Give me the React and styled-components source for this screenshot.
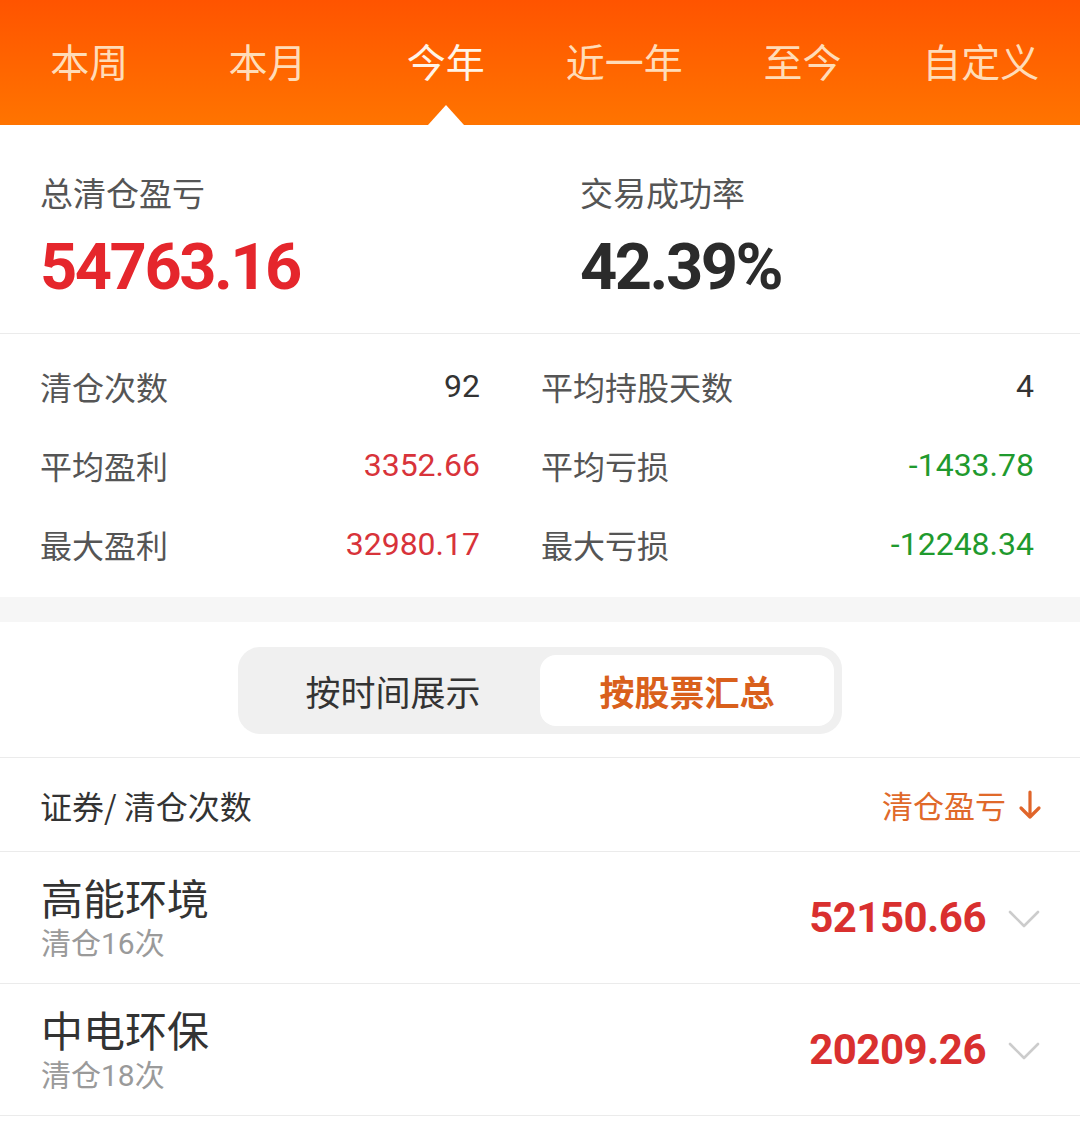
import React, { useState } from "react";
import styled, { createGlobalStyle } from "styled-components";

const GlobalStyle = createGlobalStyle`
  body {
    margin: 0;
    background: #ffffff;
    font-family: "Noto Sans CJK SC", "Noto Sans", sans-serif;
    color: #333333;
  }
`;

const NUM = `Roboto, "Noto Sans CJK SC", sans-serif`;

const tabs = ["本周", "本月", "今年", "近一年", "至今", "自定义"];

const stats = [
  [
    { label: "清仓次数", value: "92", tone: "plain" },
    { label: "平均持股天数", value: "4", tone: "plain" },
  ],
  [
    { label: "平均盈利", value: "3352.66", tone: "up" },
    { label: "平均亏损", value: "-1433.78", tone: "down" },
  ],
  [
    { label: "最大盈利", value: "32980.17", tone: "up" },
    { label: "最大亏损", value: "-12248.34", tone: "down" },
  ],
];

const stocks = [
  { name: "高能环境", count: 16, profit: "52150.66" },
  { name: "中电环保", count: 18, profit: "20209.26" },
];

const toneColor = {
  plain: "#333333",
  up: "#d8333a",
  down: "#1f9a2e",
};

export default function App() {
  const [activeTab, setActiveTab] = useState(2);
  const [mode, setMode] = useState(1);

  return (
    <>
      <GlobalStyle />
      <Header>
        {tabs.map((t, i) => (
          <Tab key={t} $active={i === activeTab} onClick={() => setActiveTab(i)}>
            {t}
          </Tab>
        ))}
      </Header>

      <Summary>
        <SummaryItem>
          <SummaryLabel>总清仓盈亏</SummaryLabel>
          <BigNumber $color="#e5262c">54763.16</BigNumber>
        </SummaryItem>
        <SummaryItem>
          <SummaryLabel>交易成功率</SummaryLabel>
          <BigNumber $color="#2b2b2b">42.39%</BigNumber>
        </SummaryItem>
      </Summary>

      <StatsGrid>
        {stats.map((row) =>
          row.map((s) => (
            <StatCell key={s.label}>
              <StatLabel>{s.label}</StatLabel>
              <StatValue $tone={s.tone}>{s.value}</StatValue>
            </StatCell>
          ))
        )}
      </StatsGrid>

      <Band />

      <SegmentArea>
        <Segmented>
          <Segment $active={mode === 0} onClick={() => setMode(0)}>
            按时间展示
          </Segment>
          <Segment $active={mode === 1} onClick={() => setMode(1)}>
            按股票汇总
          </Segment>
        </Segmented>
      </SegmentArea>

      <ListHeader>
        <HeaderLeft>证券/ 清仓次数</HeaderLeft>
        <SortButton>
          清仓盈亏
          <svg width="24" height="30" viewBox="0 0 24 30" fill="none">
            <path
              d="M12 2 V27 M3 18 L12 27 L21 18"
              stroke="#e0652a"
              strokeWidth="3.2"
              strokeLinecap="round"
              strokeLinejoin="round"
            />
          </svg>
        </SortButton>
      </ListHeader>

      {stocks.map((s) => (
        <StockRow key={s.name}>
          <StockInfo>
            <StockName>{s.name}</StockName>
            <StockSub>清仓{s.count}次</StockSub>
          </StockInfo>
          <StockProfit>{s.profit}</StockProfit>
          <Chevron width="32" height="18" viewBox="0 0 32 18" fill="none">
            <path
              d="M2 2 L16 16 L30 2"
              stroke="#cccccc"
              strokeWidth="2.6"
              strokeLinecap="round"
              strokeLinejoin="round"
            />
          </Chevron>
        </StockRow>
      ))}
    </>
  );
}

const Header = styled.div`
  height: 125px;
  background: linear-gradient(180deg, #ff5400 0%, #ff7400 100%);
  display: grid;
  grid-template-columns: repeat(6, 1fr);
  align-items: center;
  padding: 0 10px 6px 0;
  box-sizing: border-box;
`;

const Tab = styled.div`
  position: relative;
  text-align: center;
  font-size: 39px;
  line-height: 50px;
  color: ${(p) => (p.$active ? "#fff4e8" : "#ffdcb8")};
  cursor: pointer;

  &::after {
    content: "";
    display: ${(p) => (p.$active ? "block" : "none")};
    position: absolute;
    left: 50%;
    bottom: -40px;
    transform: translateX(-50%);
    width: 0;
    height: 0;
    border-left: 18px solid transparent;
    border-right: 18px solid transparent;
    border-bottom: 20px solid #ffffff;
  }
`;

const Summary = styled.div`
  display: grid;
  grid-template-columns: 540px 1fr;
  padding: 45px 0 28px 40px;
  border-bottom: 1px solid #ebebeb;
`;

const SummaryItem = styled.div`
  display: flex;
  flex-direction: column;
`;

const SummaryLabel = styled.div`
  font-size: 33px;
  line-height: 44px;
  color: #555555;
`;

const BigNumber = styled.div`
  margin-top: 15px;
  font-family: ${NUM};
  font-weight: 700;
  font-size: 65px;
  line-height: 76px;
  letter-spacing: -2.5px;
  color: ${(p) => p.$color};
`;

const StatsGrid = styled.div`
  display: grid;
  grid-template-columns: 440px 1fr;
  column-gap: 61px;
  grid-auto-rows: 79px;
  padding: 12px 46px 14px 40px;
`;

const StatCell = styled.div`
  display: flex;
  align-items: center;
  justify-content: space-between;
`;

const StatLabel = styled.span`
  font-size: 32px;
  color: #555555;
`;

const StatValue = styled.span`
  font-family: ${NUM};
  font-size: 32px;
  color: ${(p) => toneColor[p.$tone]};
`;

const Band = styled.div`
  height: 25px;
  background: #f6f6f6;
`;

const SegmentArea = styled.div`
  display: flex;
  justify-content: center;
  padding: 25px 0 23px;
  border-bottom: 1px solid #ebebeb;
`;

const Segmented = styled.div`
  width: 604px;
  height: 87px;
  box-sizing: border-box;
  padding: 8px;
  border-radius: 22px;
  background: #f0f0f0;
  display: grid;
  grid-template-columns: 1fr 1fr;
`;

const Segment = styled.div`
  display: flex;
  align-items: center;
  justify-content: center;
  border-radius: 16px;
  font-size: 35px;
  cursor: pointer;
  background: ${(p) => (p.$active ? "#ffffff" : "transparent")};
  color: ${(p) => (p.$active ? "#d9601c" : "#333333")};
  font-weight: ${(p) => (p.$active ? 700 : 400)};
`;

const ListHeader = styled.div`
  height: 93px;
  display: flex;
  align-items: center;
  justify-content: space-between;
  padding: 0 38px 0 40px;
  border-bottom: 1px solid #ebebeb;
`;

const HeaderLeft = styled.span`
  font-size: 32px;
  color: #333333;
`;

const SortButton = styled.span`
  display: flex;
  align-items: center;
  gap: 12px;
  font-size: 31px;
  color: #e0692a;
`;

const StockRow = styled.div`
  height: 131px;
  display: flex;
  align-items: center;
  padding: 0 40px 0 41px;
  border-bottom: 1px solid #ebebeb;
`;

const StockInfo = styled.div`
  flex: 1;
  display: flex;
  flex-direction: column;
`;

const StockName = styled.div`
  font-size: 42px;
  line-height: 46px;
  color: #333333;
`;

const StockSub = styled.div`
  margin-top: 6px;
  font-family: ${NUM};
  font-size: 30px;
  line-height: 36px;
  color: #9a9a9a;
`;

const StockProfit = styled.div`
  font-family: ${NUM};
  font-weight: 700;
  font-size: 42px;
  letter-spacing: -0.5px;
  color: #d9302f;
`;

const Chevron = styled.svg`
  margin-left: 22px;
  margin-top: 2px;
`;
